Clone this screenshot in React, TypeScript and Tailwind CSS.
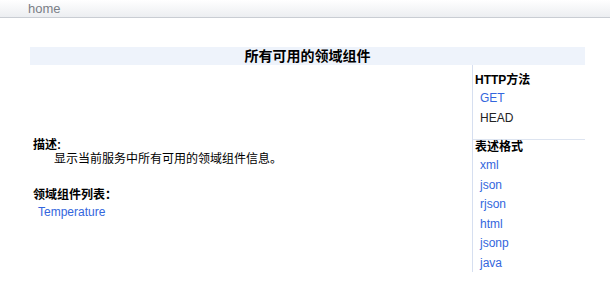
export default function App() {
	const formats = ['xml', 'json', 'rjson', 'html', 'jsonp', 'java'];

	return (
		<div className="min-h-[283px] bg-white text-[12px] text-black font-['Liberation_Sans','Noto_Sans_CJK_SC',sans-serif]">
			{/* Top navigation bar */}
			<div className="h-[18px] border-b border-[#c9cdd3] bg-gradient-to-b from-white to-[#eceef1] pl-[28px] text-[13px] leading-[17px] text-[#7a7e86]">
				home
			</div>

			<div className="ml-[30px] mr-[25px] mt-[29px]">
				{/* Page title */}
				<div className="h-[18px] bg-[#eef3fb] text-center text-[14px] font-bold leading-[18px]">
					所有可用的领域组件
				</div>

				<div className="flex">
					{/* Main content */}
					<div className="flex-1 pl-[3px] pt-[73px]">
						<div className="font-bold leading-[14px]">描述:</div>
						<div className="pl-[21px] leading-[14px]">显示当前服务中所有可用的领域组件信息。</div>
						<div className="mt-[22px] font-bold leading-[14px]">领域组件列表：</div>
						<div className="mt-[3px] pl-[5px] leading-[14px] text-[#3366dd]">Temperature</div>
					</div>

					{/* Sidebar */}
					<div className="w-[113px] border-l border-[#d6dff0] pt-[8px]">
						<div className="pl-[2px] font-bold leading-[14px]">HTTP方法</div>
						<div className="pl-[7px] pt-[4px]">
							<div className="h-[19.5px] leading-[14px] text-[#3366dd]">GET</div>
							<div className="h-[19.5px] leading-[14px] text-[#222]">HEAD</div>
						</div>
						<div className="mt-[9px] border-t border-[#dde4f0] pl-[2px] font-bold leading-[14px]">表述格式</div>
						<div className="pl-[7px] pt-[4px]">
							{formats.map(f => (
								<div key={f} className="h-[19.6px] leading-[14px] text-[#3366dd] last:h-[16px]">{f}</div>
							))}
						</div>
					</div>
				</div>
			</div>
		</div>
	);
}
